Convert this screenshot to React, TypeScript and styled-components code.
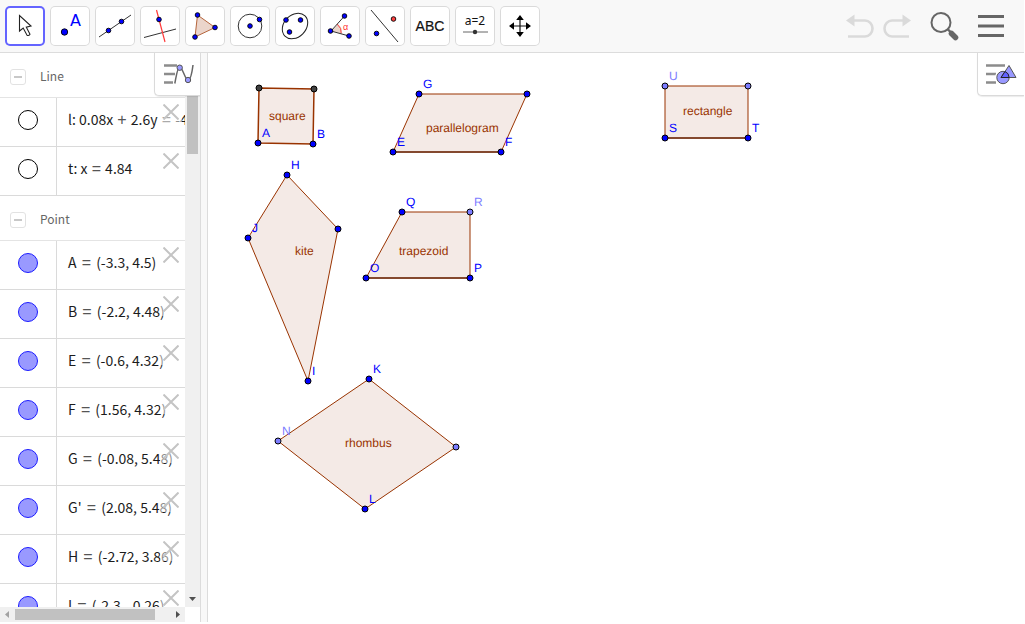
import React from "react";
import styled, { createGlobalStyle } from "styled-components";

const GlobalStyle = createGlobalStyle`
  * { box-sizing: border-box; }
  body {
    margin: 0;
    background: #fff;
    overflow: hidden;
    font-family: "Liberation Sans", Arial, sans-serif;
  }
  button { font: inherit; color: inherit; cursor: pointer; }
`;

const Page = styled.div`
  display: flex;
  flex-direction: column;
  height: 100vh;
  padding: 0 1px 2px 0;
`;

const Header = styled.header`
  flex: none;
  display: flex;
  justify-content: space-between;
  align-items: center;
  height: 53px;
  padding: 0 15px 0 5px;
  background: #f8f8f8;
  border-bottom: 1px solid #dcdcdc;
`;

const Tools = styled.nav`
  display: flex;
  gap: 5px;
`;

const ToolButton = styled.button<{ $active?: boolean }>`
  width: 40px;
  height: 40px;
  padding: 0;
  display: grid;
  place-items: center;
  background: #fff;
  border: 0;
  border-radius: 5px;
  box-shadow: inset 0 0 0 ${(p) => (p.$active ? "2px #6464ff" : "1px #dadada")};
`;

const HeaderActions = styled.div`
  display: flex;
  align-items: center;
`;

const ActionButton = styled.button<{ $width: number }>`
  width: ${(p) => p.$width}px;
  height: 40px;
  padding: 0;
  display: grid;
  place-items: center;
  border: 0;
  background: none;
`;

const Workspace = styled.main`
  flex: 1;
  min-height: 0;
  display: flex;
`;

const Sidebar = styled.aside`
  position: relative;
  flex: none;
  width: 200px;
  display: grid;
  grid-template-columns: minmax(0, 1fr) 15px;
  grid-template-rows: minmax(0, 1fr) 15px;
`;

const Divider = styled.div`
  flex: none;
  width: 8px;
  background: #f8f8f8;
  border: solid #dcdcdc;
  border-width: 0 1px;
`;

const ObjectList = styled.div`
  overflow: hidden;
  font-family: "Noto Sans CJK SC", "Noto Sans", sans-serif;
`;

const GroupHeading = styled.div`
  display: flex;
  align-items: center;
  gap: 14px;
  height: 45px;
  padding: 4px 0 0 10px;
  border-bottom: 1px solid #e4e4e4;
`;

const GroupTitle = styled.h2`
  margin: 0 0 2px;
  font-size: 12px;
  line-height: 16px;
  font-weight: 400;
  color: #666;
`;

const CollapseButton = styled.button`
  width: 16px;
  height: 16px;
  padding: 0;
  display: grid;
  place-items: center;
  background: #fff;
  border: 1px solid #e2e2e2;
  border-radius: 3px;
`;

const Rows = styled.ul`
  margin: 0;
  padding: 0;
  list-style: none;
`;

const Row = styled.li`
  position: relative;
  display: flex;
  height: 49px;
  border-bottom: 1px solid #dadada;
`;

const MarbleCell = styled.div`
  flex: none;
  width: 57px;
  padding: 0 1px 4px 0;
  display: grid;
  place-items: center;
  border-right: 1px solid #dadada;
`;

const Marble = styled.button<{ $filled: boolean }>`
  width: 20px;
  height: 20px;
  padding: 0;
  border-radius: 50%;
  border: 1px solid ${(p) => (p.$filled ? "#1c1cff" : "#000")};
  background: ${(p) => (p.$filled ? "#9999ff" : "#fff")};
`;

const Expression = styled.div`
  flex: 1;
  min-width: 0;
  padding: 11px 0 0 11px;
  overflow: hidden;
  white-space: nowrap;
  font-size: 14px;
  line-height: 20px;
  color: #1c1c1c;
`;

const Operator = styled.span<{ $tight?: boolean }>`
  margin: 0 ${(p) => (p.$tight ? 1 : 2)}px;
  font-family: "Liberation Sans", Arial, sans-serif;
  font-size: 16px;
  line-height: 16px;
  color: #555;
`;

const RemoveButton = styled.button`
  position: absolute;
  top: 2px;
  right: 3px;
  width: 22px;
  height: 24px;
  padding: 0;
  display: grid;
  place-items: center;
  border: 0;
  background: rgba(255, 255, 255, 0.5);
`;

const VerticalBar = styled.div`
  display: flex;
  flex-direction: column;
  justify-content: space-between;
  align-items: center;
  padding: 42px 0 6px;
  background: #f0f0f0;
`;

const VerticalThumb = styled.div`
  width: 11px;
  height: 59px;
  background: #c1c1c1;
`;

const HorizontalBar = styled.div`
  display: grid;
  grid-template-columns: auto 1fr auto;
  gap: 6px;
  align-items: center;
  padding: 0 5px;
  background: #f0f0f0;
`;

const HorizontalThumb = styled.div`
  width: 140px;
  height: 11px;
  background: #c1c1c1;
`;

const StyleButton = styled.button<{ $width: number }>`
  position: absolute;
  top: 0;
  right: 0;
  width: ${(p) => p.$width}px;
  height: 43px;
  padding: 0;
  display: grid;
  place-items: center;
  background: #fff;
  border: solid #dadada;
  border-width: 0 0 1px 1px;
  border-radius: 0 0 0 5px;
  box-shadow: 0 1px 1px rgba(0, 0, 0, 0.08);
`;

const Graphics = styled.section`
  position: relative;
  flex: 1;
  min-width: 0;
  overflow: hidden;
`;

const Drawing = styled.svg`
  display: block;
  width: 100%;
  height: 100%;
  font-family: "Liberation Sans", Arial, sans-serif;
  font-size: 12px;
  text-rendering: geometricPrecision;
`;

const Icon = styled.svg`
  display: block;
`;

const Dot = ({ x, y, r = 2.3, fill = "#0000ff" }: { x: number; y: number; r?: number; fill?: string }) => (
  <circle cx={x} cy={y} r={r} fill={fill} stroke="#000" strokeWidth="0.9" />
);

const toolIcons: { name: string; art: React.ReactNode }[] = [
  {
    name: "Move",
    art: <path d="M14.5 9.500v15.500l3.700-3 3.800 7.200q1.700 1 3-.9l-3.700-7.100 4.700-1.200z" fill="#fff" stroke="#222" strokeWidth="1.100" />,
  },
  {
    name: "Point",
    art: (
      <>
        <Dot x={14.5} y={26} r={3.2} />
        <text x="20" y="20" fontSize="16" fill="#0000ff" fontFamily="DejaVu Sans, sans-serif">A</text>
      </>
    ),
  },
  {
    name: "Line",
    art: (
      <>
        <path d="M4 31 36 9" stroke="#333" />
        <Dot x={13.5} y={24.5} />
        <Dot x={26.5} y={15.5} />
      </>
    ),
  },
  {
    name: "Perpendicular Line",
    art: (
      <>
        <path d="M4 31.500 36 23" stroke="#333" />
        <path d="M16.500 4 25 36" stroke="#ff3b3b" strokeWidth="1.200" />
        <Dot x={19} y={13.5} />
      </>
    ),
  },
  {
    name: "Polygon",
    art: (
      <>
        <path d="M12.500 9 30 21.500 10 31z" fill="#ebd5cb" stroke="#b5653c" />
        <Dot x={12.5} y={9} />
        <Dot x={30} y={21.5} />
        <Dot x={10} y={31} />
      </>
    ),
  },
  {
    name: "Circle with Center",
    art: (
      <>
        <circle cx="20" cy="20" r="11.800" fill="none" stroke="#333" />
        <Dot x={20} y={20} />
        <Dot x={29.5} y={13.5} />
      </>
    ),
  },
  {
    name: "Ellipse",
    art: (
      <>
        <ellipse cx="20" cy="20" rx="14.200" ry="11" transform="rotate(-45 20 20)" fill="none" stroke="#222" />
        <Dot x={11} y={14} />
        <Dot x={25.5} y={14} />
        <Dot x={14.5} y={26} />
      </>
    ),
  },
  {
    name: "Angle",
    art: (
      <>
        <path d="M11 25 18 18q5 4 3.500 9.500z" fill="#ebd5cb" />
        <path d="M17 18q5 4 4.200 9.500" fill="none" stroke="#ff4040" />
        <path d="M24.500 10 11 25 29 30" fill="none" stroke="#333" />
        <text x="23" y="24" fontSize="9" fill="#ff3030">α</text>
        <Dot x={24.5} y={10} />
        <Dot x={10.5} y={25} />
        <Dot x={29} y={30} />
      </>
    ),
  },
  {
    name: "Reflect about Line",
    art: (
      <>
        <path d="M6 4 33 36" stroke="#333" />
        <Dot x={28.5} y={13} fill="#ff4040" />
        <Dot x={11.5} y={27.5} />
      </>
    ),
  },
  {
    name: "Text",
    art: (
      <text x="20" y="25" fontSize="14" textAnchor="middle" fill="#111" stroke="#111" strokeWidth="0.2">ABC</text>
    ),
  },
  {
    name: "Slider",
    art: (
      <>
        <text x="20" y="19" fontSize="12" textAnchor="middle" fill="#111" fontFamily="Noto Sans, sans-serif">a=2</text>
        <path d="M8 26h25" stroke="#666" />
        <circle cx="20" cy="26" r="2.200" fill="#333" />
      </>
    ),
  },
  {
    name: "Move Graphics View",
    art: (
      <>
        <path d="M20 13v14M13 20h14" stroke="#111" strokeWidth="1.200" />
        <path d="m20 9 3.800 5h-7.600zM20 31l3.800-5h-7.600zM9 20l5-3.800v7.600zM31 20l-5-3.800v7.600z" fill="#000" />
      </>
    ),
  },
];

type Line = { name: string; label: React.ReactNode };

const lines: Line[] = [
  {
    name: "l",
    label: (
      <>
        l: 0.08x <Operator $tight>+</Operator> 2.6y <Operator $tight>=</Operator> -4
      </>
    ),
  },
  {
    name: "t",
    label: (
      <>
        t: x <Operator $tight>=</Operator> 4.84
      </>
    ),
  },
];

const pointValues: [string, string][] = [
  ["A", "(-3.3, 4.5)"],
  ["B", "(-2.2, 4.48)"],
  ["E", "(-0.6, 4.32)"],
  ["F", "(1.56, 4.32)"],
  ["G", "(-0.08, 5.48)"],
  ["G'", "(2.08, 5.48)"],
  ["H", "(-2.72, 3.86)"],
  ["I", "(-2.3, -0.26)"],
];

const points: Line[] = pointValues.map(([name, value]) => ({
  name,
  label: (
    <>
      {name} <Operator>=</Operator> {value}
    </>
  ),
}));

function Group({ title, items, filled }: { title: string; items: Line[]; filled: boolean }) {
  return (
    <section>
      <GroupHeading>
        <CollapseButton aria-label={`Collapse ${title}`}>
          <Icon width="8" height="2" viewBox="0 0 8 2">
            <path d="M0 1h8" stroke="#c8c8c8" strokeWidth="2" />
          </Icon>
        </CollapseButton>
        <GroupTitle>{title}</GroupTitle>
      </GroupHeading>
      <Rows>
        {items.map((item) => (
          <Row key={item.name}>
            <MarbleCell>
              <Marble $filled={filled} aria-label={`Show or hide ${item.name}`} />
            </MarbleCell>
            <Expression>{item.label}</Expression>
            <RemoveButton aria-label={`Remove ${item.name}`}>
              <Icon width="16" height="16" viewBox="0 0 16 16">
                <path d="m.5.5 15 15m0-15-15 15" stroke="#c4c4c4" strokeWidth="2" />
              </Icon>
            </RemoveButton>
          </Row>
        ))}
      </Rows>
    </section>
  );
}

type Vertex = { x: number; y: number; label?: string; kind?: "free" | "path" | "fixed" };
type Shape = { caption: string; cx: number; cy: number; base?: boolean; vertices: Vertex[] };

/* The first two vertices of a shape are the ends of its base. */
const shapes: Shape[] = [
  {
    caption: "square", cx: 61, cy: 67,
    vertices: [
      { x: 50, y: 90, label: "A" },
      { x: 105, y: 91, label: "B" },
      { x: 106, y: 36, kind: "fixed" },
      { x: 51, y: 35, kind: "fixed" },
    ],
  },
  {
    caption: "parallelogram", cx: 218, cy: 79, base: true,
    vertices: [
      { x: 185, y: 99, label: "E" },
      { x: 293, y: 99, label: "F" },
      { x: 319, y: 41 },
      { x: 211, y: 41, label: "G" },
    ],
  },
  {
    caption: "kite", cx: 87, cy: 202,
    vertices: [
      { x: 79, y: 122, label: "H" },
      { x: 130, y: 176 },
      { x: 100, y: 328, label: "I" },
      { x: 40, y: 185, label: "J" },
    ],
  },
  {
    caption: "trapezoid", cx: 191, cy: 202, base: true,
    vertices: [
      { x: 158, y: 225, label: "O" },
      { x: 262, y: 225, label: "P" },
      { x: 262, y: 159, label: "R", kind: "path" },
      { x: 194, y: 159, label: "Q" },
    ],
  },
  {
    caption: "rhombus", cx: 137, cy: 394,
    vertices: [
      { x: 161, y: 326, label: "K" },
      { x: 248, y: 394, kind: "path" },
      { x: 157, y: 456, label: "L" },
      { x: 70, y: 388, label: "N", kind: "path" },
    ],
  },
  {
    caption: "rectangle", cx: 475, cy: 62, base: true,
    vertices: [
      { x: 457, y: 85, label: "S" },
      { x: 540, y: 85, label: "T" },
      { x: 540, y: 33, kind: "path" },
      { x: 457, y: 33, label: "U", kind: "path" },
    ],
  },
];

const pointColor = { free: "#0000ff", path: "#7d7dff", fixed: "#404040" };

function ShapeFigure({ shape }: { shape: Shape }) {
  const [start, end] = shape.vertices;
  return (
    <g>
      <polygon
        points={shape.vertices.map((v) => `${v.x},${v.y}`).join(" ")}
        fill="#f4eae6"
        stroke="#993300"
        strokeWidth={shape.caption === "square" ? 1.5 : 1}
      />
      {shape.base && (
        <path d={`M${start.x} ${start.y}H${end.x}`} stroke="#84492f" strokeWidth="2" />
      )}
      <text x={shape.cx} y={shape.cy} fill="#993300">{shape.caption}</text>
      {shape.vertices.map((v, i) => {
        const color = pointColor[v.kind ?? "free"];
        return (
          <g key={i}>
            <circle cx={v.x} cy={v.y} r="3" fill={color} stroke="#000" strokeWidth="1" />
            {v.label && <text x={v.x + 4} y={v.y - 6} fill={color}>{v.label}</text>}
          </g>
        );
      })}
    </g>
  );
}

export default function App() {
  return (
    <>
      <GlobalStyle />
      <Page>
        <Header>
          <Tools aria-label="Tools">
            {toolIcons.map((tool, i) => (
              <ToolButton key={tool.name} $active={i === 0} aria-label={tool.name}>
                <Icon width="40" height="40" viewBox="0 0 40 40">{tool.art}</Icon>
              </ToolButton>
            ))}
          </Tools>
          <HeaderActions>
            <ActionButton $width={36} aria-label="Undo">
              <Icon width="28" height="26" viewBox="0 0 28 26">
                <path d="M7 7.500h12a7.500 8 0 0 1 0 16H2" fill="none" stroke="#dadada" strokeWidth="2.600" />
                <path d="M0 7.500 8.500 1.500v12z" fill="#dadada" />
              </Icon>
            </ActionButton>
            <ActionButton $width={38} aria-label="Redo">
              <Icon width="28" height="26" viewBox="0 0 28 26">
                <path d="M21 7.500H9a7.500 8 0 0 0 0 16h17" fill="none" stroke="#dadada" strokeWidth="2.600" />
                <path d="M28 7.500 19.500 1.500v12z" fill="#dadada" />
              </Icon>
            </ActionButton>
            <ActionButton $width={57} aria-label="Search">
              <Icon width="30" height="30" viewBox="0 0 30 30">
                <circle cx="11" cy="11.500" r="9.500" fill="none" stroke="#666" strokeWidth="2" />
                <path d="m17.500 18 3.500 3.500" stroke="#666" strokeWidth="2.400" />
                <path d="m21.500 22.500 4 4" stroke="#666" strokeWidth="5.500" strokeLinecap="round" />
              </Icon>
            </ActionButton>
            <ActionButton $width={36} aria-label="Menu">
              <Icon width="28" height="24" viewBox="0 0 28 24">
                <path d="M1 2.500h26M1 12h26M1 21.500h26" stroke="#666" strokeWidth="3" />
              </Icon>
            </ActionButton>
          </HeaderActions>
        </Header>
        <Workspace>
          <Sidebar>
            <ObjectList>
              <Group title="Line" items={lines} filled={false} />
              <Group title="Point" items={points} filled />
            </ObjectList>
            <VerticalBar>
              <VerticalThumb />
              <Icon width="7" height="4" viewBox="0 0 7 4"><path d="M0 0h7L3.500 4z" fill="#505050" /></Icon>
            </VerticalBar>
            <HorizontalBar>
              <Icon width="4" height="7" viewBox="0 0 4 7"><path d="M4 0v7L0 3.500z" fill="#a3a3a3" /></Icon>
              <HorizontalThumb />
              <Icon width="4" height="7" viewBox="0 0 4 7"><path d="M0 0v7l4-3.500z" fill="#505050" /></Icon>
            </HorizontalBar>
            <StyleButton $width={46} aria-label="Algebra view style bar">
              <Icon width="32" height="24" viewBox="0 0 32 24">
                <path d="M2 3.500h13M2 12h11M2 20.500h9" stroke="#8c8c8c" strokeWidth="2.500" />
                <path d="M12.800 21.500C14.500 13 15.500 5 17.700 5c2.800 0 5.300 13 8.300 13 2.500 0 4-7 5-15" fill="none" stroke="#666" strokeWidth="1.500" />
                <circle cx="17.700" cy="5.700" r="2.700" fill="#9999ff" stroke="#555" />
                <circle cx="26" cy="18" r="2.700" fill="#9999ff" stroke="#555" />
              </Icon>
            </StyleButton>
          </Sidebar>
          <Divider />
          <Graphics aria-label="Graphics view">
            <Drawing>
              {shapes.map((shape) => (
                <ShapeFigure key={shape.caption} shape={shape} />
              ))}
            </Drawing>
            <StyleButton $width={47} aria-label="Graphics view style bar">
              <Icon width="32" height="24" viewBox="0 0 32 24">
                <path d="M1 3.500h19M1 12h10M1 20.500h10" stroke="#8c8c8c" strokeWidth="2.500" />
                <circle cx="18" cy="15.500" r="8" fill="#fff" />
                <path d="M24 .5 33 17H14z" fill="#fff" />
                <circle cx="18" cy="15.500" r="6.200" fill="#9999ff" stroke="#555" />
                <path d="M24 3.500 31 15.500H16z" fill="#9999ff" stroke="#555" />
                <path d="M24.200 15.500H16l4-6q4 1.500 4.200 6z" fill="#6262ff" stroke="#222" />
              </Icon>
            </StyleButton>
          </Graphics>
        </Workspace>
      </Page>
    </>
  );
}
